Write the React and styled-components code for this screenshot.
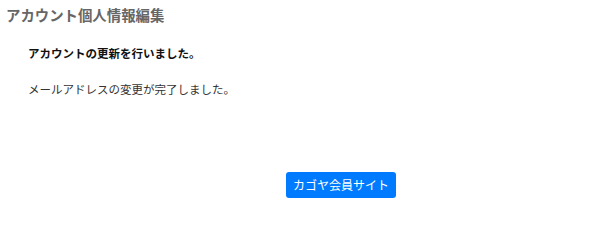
import React from 'react';
import styled, { createGlobalStyle } from 'styled-components';

const GlobalStyle = createGlobalStyle`
  body {
    margin: 0;
    background: #fff;
    font-family: "Noto Sans CJK JP", "Noto Sans", sans-serif;
  }
`;

const Page = styled.div`
  width: 600px;
  height: 208px;
  box-sizing: border-box;
  padding: 4px 6px 0;
`;

const Title = styled.h1`
  margin: 0;
  font-size: 14.4px;
  line-height: 22px;
  font-weight: 700;
  color: #666;
`;

const Content = styled.div`
  padding: 18px 0 0 22px;
  display: flex;
  flex-direction: column;
  gap: 18px;
`;

const Message = styled.p`
  margin: 0;
  font-size: 11.5px;
  line-height: 18px;
  font-weight: ${props => (props.$bold ? 700 : 400)};
  color: ${props => (props.$bold ? '#111' : '#333')};
`;

const Footer = styled.div`
  display: flex;
  padding: 74px 0 0 280px;
`;

const Button = styled.button`
  height: 26px;
  width: 110px;
  padding: 0 7px;
  border: none;
  border-radius: 3px;
  background: #007bff;
  color: #fff;
  font-family: inherit;
  font-size: 12px;
  line-height: 26px;
  cursor: pointer;
`;

export default function App() {
  return (
    <>
      <GlobalStyle />
      <Page>
        <Title>アカウント個人情報編集</Title>
        <Content>
          <Message $bold>アカウントの更新を行いました。</Message>
          <Message>メールアドレスの変更が完了しました。</Message>
        </Content>
        <Footer>
          <Button type="button">カゴヤ会員サイト</Button>
        </Footer>
      </Page>
    </>
  );
}
